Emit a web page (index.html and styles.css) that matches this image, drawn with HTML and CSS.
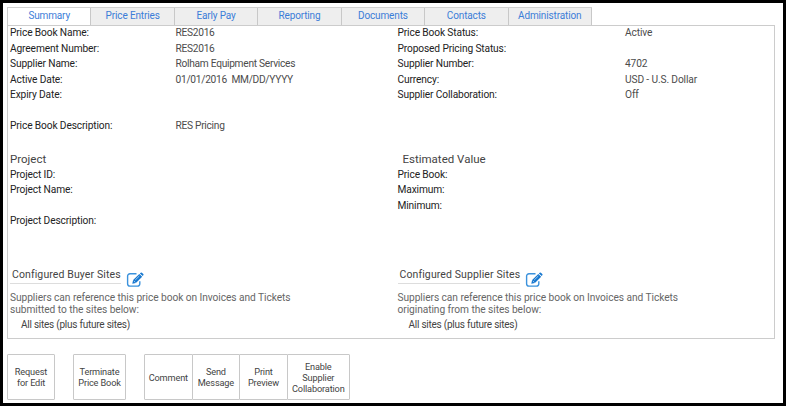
FILE: index.html
```html
<!DOCTYPE html>
<html lang="en">
<head>
<meta charset="utf-8">
<title>Price Book</title>
<link rel="stylesheet" href="styles.css">
</head>
<body>
<main class="frame">
  <nav class="tabs">
    <a class="tab active">Summary</a><a class="tab">Price Entries</a><a class="tab">Early Pay</a><a class="tab">Reporting</a><a class="tab">Documents</a><a class="tab">Contacts</a><a class="tab">Administration</a>
  </nav>
  <section class="panel">
    <div class="col left">
      <dl class="fields">
        <dt>Price Book Name:</dt><dd>RES2016</dd>
        <dt>Agreement Number:</dt><dd>RES2016</dd>
        <dt>Supplier Name:</dt><dd>Rolham Equipment Services</dd>
        <dt>Active Date:</dt><dd>01/01/2016&nbsp; MM/DD/YYYY</dd>
        <dt>Expiry Date:</dt><dd></dd>
        <dt></dt><dd></dd>
        <dt>Price Book Description:</dt><dd>RES Pricing</dd>
      </dl>
      <h2 class="title">Project</h2>
      <dl class="fields second">
        <dt>Project ID:</dt><dd></dd>
        <dt>Project Name:</dt><dd></dd>
        <dt></dt><dd></dd>
        <dt>Project Description:</dt><dd></dd>
      </dl>
      <div class="sites-head"><h3 class="sites-title">Configured Buyer Sites</h3>
        <svg class="edit" viewBox="0 0 18 16"><path d="M10.5 1.7H4a2.4 2.4 0 0 0-2.4 2.4v7.6A2.4 2.4 0 0 0 4 14.1h7.4a2.4 2.4 0 0 0 2.4-2.4V9.2" fill="none" stroke="#3b92dc" stroke-width="1.4"/><path d="M6.3 11.7l.8-3.7 6.2-6 2.9 2.8-6.3 6.1z" fill="#1878cf"/><path d="M13.9 1.4l.8-.7q.6-.5 1.2 0l1.4 1.3q.6.6 0 1.2l-.6.9z" fill="#1878cf"/><path d="M7.7 8.8l1.8 1.7M9.2 8l4.1-4" stroke="#d7eafa" stroke-width=".7"/></svg>
      </div>
      <p class="note">Suppliers can reference this price book on Invoices and Tickets<br>submitted to the sites below:</p>
      <p class="site">All sites (plus future sites)</p>
    </div>
    <div class="col right">
      <dl class="fields">
        <dt>Price Book Status:</dt><dd>Active</dd>
        <dt>Proposed Pricing Status:</dt><dd></dd>
        <dt>Supplier Number:</dt><dd>4702</dd>
        <dt>Currency:</dt><dd>USD - U.S. Dollar</dd>
        <dt>Supplier Collaboration:</dt><dd>Off</dd>
        <dt></dt><dd></dd>
        <dt></dt><dd></dd>
      </dl>
      <h2 class="title inset">Estimated Value</h2>
      <dl class="fields second">
        <dt>Price Book:</dt><dd></dd>
        <dt>Maximum:</dt><dd></dd>
        <dt>Minimum:</dt><dd></dd>
        <dt></dt><dd></dd>
      </dl>
      <div class="sites-head"><h3 class="sites-title">Configured Supplier Sites</h3>
        <svg class="edit" viewBox="0 0 18 16"><path d="M10.5 1.7H4a2.4 2.4 0 0 0-2.4 2.4v7.6A2.4 2.4 0 0 0 4 14.1h7.4a2.4 2.4 0 0 0 2.4-2.4V9.2" fill="none" stroke="#3b92dc" stroke-width="1.4"/><path d="M6.3 11.7l.8-3.7 6.2-6 2.9 2.8-6.3 6.1z" fill="#1878cf"/><path d="M13.9 1.4l.8-.7q.6-.5 1.2 0l1.4 1.3q.6.6 0 1.2l-.6.9z" fill="#1878cf"/><path d="M7.7 8.8l1.8 1.7M9.2 8l4.1-4" stroke="#d7eafa" stroke-width=".7"/></svg>
      </div>
      <p class="note">Suppliers can reference this price book on Invoices and Tickets<br>originating from the sites below:</p>
      <p class="site">All sites (plus future sites)</p>
    </div>
  </section>
  <div class="actions">
    <button class="btn request">Request<br>for Edit</button>
    <button class="btn terminate">Terminate<br>Price Book</button>
    <div class="group">
      <button class="btn">Comment</button><button class="btn">Send<br>Message</button><button class="btn">Print<br>Preview</button><button class="btn wide">Enable<br>Supplier<br>Collaboration</button>
    </div>
  </div>
</main>
</body>
</html>
```
FILE: styles.css
```css
* { box-sizing: border-box; margin: 0; padding: 0; }
body { font-family: Roboto, "Liberation Sans", sans-serif; background: #fff; color: #333; }
.frame { width: 786px; height: 406px; border: 3px solid #000; padding: 4px 8px 0 4px; overflow: hidden; }
.tabs { display: flex; width: 585px; height: 18px; border-top: 1px solid #d0d0d0; border-left: 1px solid #ccc; }
.tab { flex: 1; border-right: 1px solid #c8c8c8; background: #eee; color: #3b7dd8; font-size: 10px; letter-spacing: -.14px; line-height: 16px; text-align: center; }
.tab.active { background: #fff; }
.panel { display: flex; width: 768px; height: 314px; border: 1px solid #ccc; padding: 0 0 0 2px; }
.left { width: 387.5px; }
.right { flex: 1; }
.fields { display: grid; grid-template-columns: 165.5px 1fr; grid-auto-rows: 15.5px; margin-top: -1px; font-size: 10.2px; line-height: 15.5px; white-space: nowrap; }
.right .fields { grid-template-columns: 227.5px 1fr; }
dt { color: #222; letter-spacing: -.13px; }
dd { color: #4c4c4c; letter-spacing: -.28px; }
.right dd { letter-spacing: -.13px; }
.title { margin-top: 17px; height: 17px; font-size: 11.5px; font-weight: 400; line-height: 16px; color: #444; letter-spacing: 0; }
.inset { padding-left: 5px; }
.sites-head { display: flex; margin-top: 39px; height: 20px; }
.sites-title { height: 16px; padding-left: 2px; border-bottom: 1px solid #ddd; font-size: 10.5px; font-weight: 400; line-height: 14px; letter-spacing: .11px; color: #444; }
.edit { width: 18px; height: 16px; margin: 4px 0 0 5px; }
.note { margin-top: 4px; font-size: 10.2px; line-height: 12px; color: #666; letter-spacing: -.06px; white-space: nowrap; }
.site { margin: 1px 0 0 11px; font-size: 10px; line-height: 16px; color: #444; letter-spacing: -.24px; }
.actions { display: flex; height: 46px; margin-top: 15px; }
.group { display: flex; }
.btn { width: 48px; height: 46px; border: 1px solid #c8c8c8; border-radius: 1px; background: #fff; color: #444; font: 9.2px/11px Roboto, sans-serif; letter-spacing: -.15px; text-align: center; white-space: nowrap; }
.terminate { width: 53px; margin: 0 18px; }
.group .btn + .btn { margin-left: -1px; }
.group .btn { width: 48.6px; }
.group .wide { width: 63px; }
```
